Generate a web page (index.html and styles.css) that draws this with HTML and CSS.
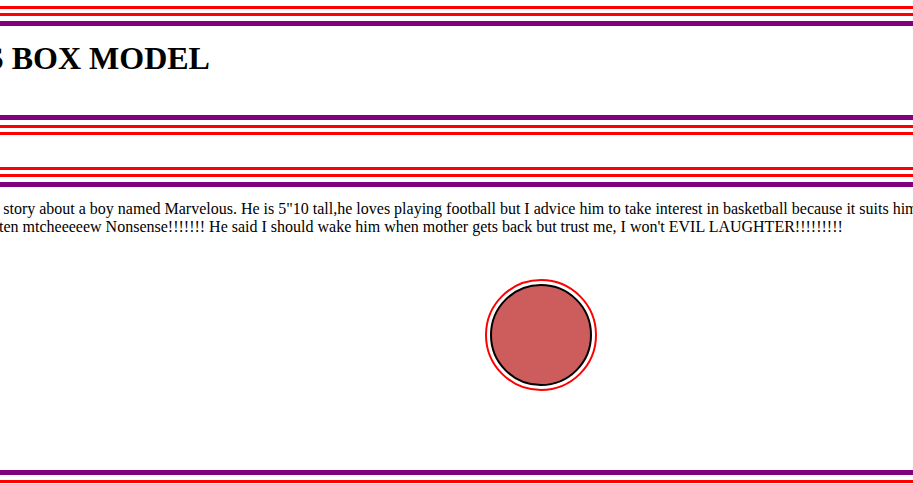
FILE: index.html
```html
<!DOCTYPE html>
<html lang="en">
<head>
<meta charset="utf-8">
<title>CSS Box Model</title>
<link rel="stylesheet" href="styles.css">
</head>
<body>
<div class="page">
  <header class="banner">
    <h1 class="title">CSS BOX MODEL</h1>
  </header>
  <main class="story">
    <p class="story-text">This is a story about a boy named Marvelous. He is 5"10 tall,he loves playing football but I advice him to take interest in basketball because it suits him better because he is tall but he won't listen mtcheeeeew Nonsense!!!!!!! He said I should wake him when mother gets back but trust me, I won't EVIL LAUGHTER!!!!!!!!!</p>
    <div class="ball"></div>
  </main>
</div>
</body>
</html>
```

FILE: styles.css
```css
html {
  overflow: hidden;
}

html, body {
  margin: 0;
  padding: 0;
  background: #ffffff;
}

body {
  font-family: "Liberation Serif", "Times New Roman", serif;
  color: #000000;
}

.page {
  width: 1242px;
  margin-left: -80px;
  padding-top: 21px;
  padding-bottom: 40px;
}

.banner {
  border: 5px solid purple;
  outline: 10px double red;
  outline-offset: 5px;
  padding: 14px 20px 38px;
}

.title {
  margin: 0;
  font-size: 32px;
  font-weight: bold;
}

.story {
  display: block;
  margin-top: 62px;
  border: 5px solid purple;
  outline: 10px double red;
  outline-offset: 5px;
  padding: 13px 20px 84px;
}

.story-text {
  margin: 0;
  font-size: 16px;
}

.ball {
  width: 98px;
  height: 98px;
  margin: 48px auto 0;
  border: 2px solid #000000;
  border-radius: 50%;
  background: indianred;
  outline: 2px solid red;
  outline-offset: 3px;
}
```
